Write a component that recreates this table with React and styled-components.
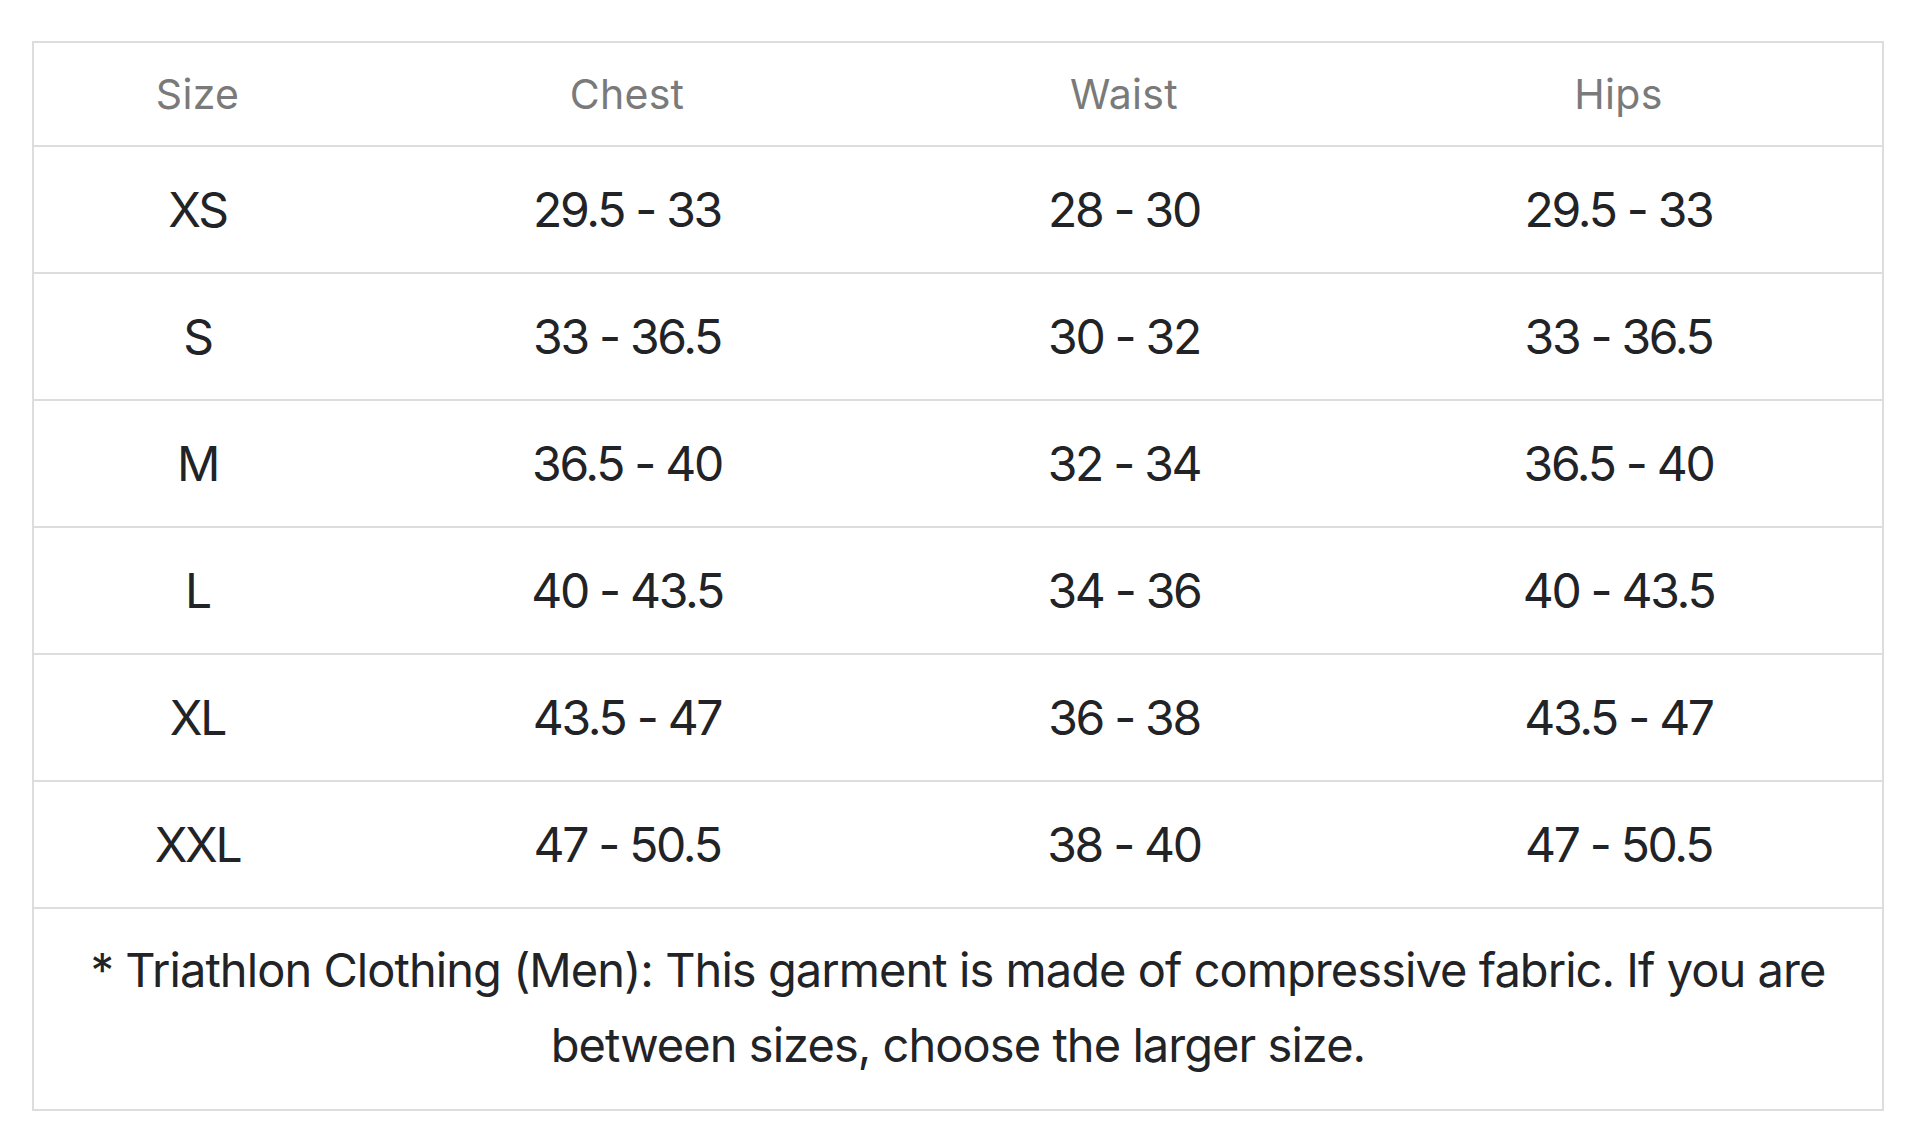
import React from "react";
import styled, { createGlobalStyle } from "styled-components";

const GlobalStyle = createGlobalStyle`
  html, body {
    margin: 0;
    padding: 0;
    background: #ffffff;
  }
  body {
    font-family: Inter, "Noto Sans", "Liberation Sans", sans-serif;
    color: #222326;
  }
`;

const Page = styled.div`
  padding: 41px 36px 0 32px;
`;

const Table = styled.table`
  width: 1852px;
  border-collapse: separate;
  border-spacing: 0;
  border: 2px solid #dddddd;
  table-layout: fixed;
`;

const Col = styled.col`
  width: ${(p) => p.$w}px;
`;

const HeadCell = styled.th`
  height: 102px;
  padding: 0;
  font-weight: 400;
  font-size: 41px;
  letter-spacing: 0.3px;
  color: #7a7a7a;
  text-align: center;
  vertical-align: middle;
  border-bottom: 2px solid #dddddd;
`;

const Cell = styled.td`
  height: 125px;
  padding: 0;
  font-size: 48px;
  letter-spacing: -2.3px;
  color: #222326;
  text-align: center;
  vertical-align: middle;
  border-bottom: 2px solid #dddddd;
`;

const NoteCell = styled.td`
  padding: 23px 40px 27px;
  font-size: 47px;
  line-height: 75px;
  letter-spacing: -0.95px;
  color: #222326;
  text-align: center;
`;

const rows = [
  ["XS", "29.5 - 33", "28 - 30", "29.5 - 33"],
  ["S", "33 - 36.5", "30 - 32", "33 - 36.5"],
  ["M", "36.5 - 40", "32 - 34", "36.5 - 40"],
  ["L", "40 - 43.5", "34 - 36", "40 - 43.5"],
  ["XL", "43.5 - 47", "36 - 38", "43.5 - 47"],
  ["XXL", "47 - 50.5", "38 - 40", "47 - 50.5"],
];

export default function App() {
  return (
    <>
      <GlobalStyle />
      <Page>
        <Table>
          <colgroup>
            <Col $w={327} />
            <Col $w={532} />
            <Col $w={462} />
            <Col $w={527} />
          </colgroup>
          <thead>
            <tr>
              <HeadCell>Size</HeadCell>
              <HeadCell>Chest</HeadCell>
              <HeadCell>Waist</HeadCell>
              <HeadCell>Hips</HeadCell>
            </tr>
          </thead>
          <tbody>
            {rows.map((r) => (
              <tr key={r[0]}>
                {r.map((c, i) => (
                  <Cell key={i}>{c}</Cell>
                ))}
              </tr>
            ))}
            <tr>
              <NoteCell colSpan={4}>
                * Triathlon Clothing (Men): This garment is made of compressive
                fabric. If you are between sizes, choose the larger size.
              </NoteCell>
            </tr>
          </tbody>
        </Table>
      </Page>
    </>
  );
}
